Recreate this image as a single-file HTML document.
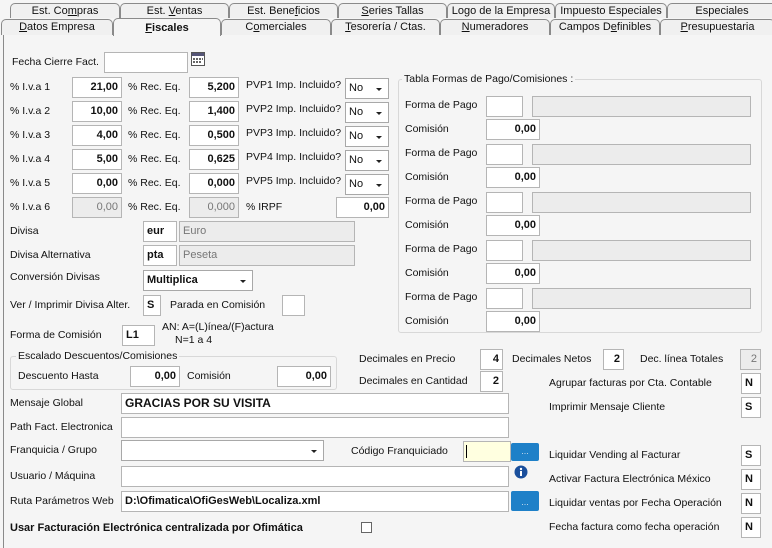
<!DOCTYPE html>
<html style="width:772px;height:548px;overflow:hidden"><head><meta charset="utf-8"><style>
*{box-sizing:border-box;margin:0;padding:0}
body{width:772px;height:548px;position:relative;background:#f5f5f5;font-family:"Liberation Sans",Arial,sans-serif;font-size:10.5px;color:#111;overflow:hidden}
.a{position:absolute;white-space:nowrap}
.t{position:absolute;height:15px;border:1px solid #8a8a8a;border-bottom:none;border-radius:5px 5px 0 0;background:#f0f0f0;text-align:center;font-size:11px;line-height:14px}
.i{position:absolute;background:#fff;border:1px solid #b5b5b5;height:21px;font-weight:bold;line-height:19px;padding:0 3px;text-align:right;font-size:11px}
.g{background:#ececec;color:#777;font-weight:normal}
.l{text-align:left}
.s{position:absolute;background:#fff;border:1px solid #a8a8a8;height:21px;line-height:19px;padding-left:3px;font-size:11px}
.s:after{content:"";position:absolute;right:6px;top:9px;border-left:3px solid transparent;border-right:3px solid transparent;border-top:3px solid #222}
.b{position:absolute;background:#1e80c8;border-radius:2px;color:#cde;text-align:center;font-size:9px;line-height:16px}
.box{position:absolute;border:1px solid #d8d8d8;border-radius:3px}
.lg{position:absolute;background:#f5f5f5;padding:0 2px}
u{text-decoration:underline}
</style></head><body>
<div class="a" style="left:3px;top:34px;width:769px;height:514px;border:1px solid #8a8a8a;border-right:none;border-bottom:none;background:#f5f5f5"></div>
<div class="t" style="left:10px;top:3px;width:110px">Est. Co<u>m</u>pras</div>
<div class="t" style="left:120px;top:3px;width:109px">Est. <u>V</u>entas</div>
<div class="t" style="left:229px;top:3px;width:109px">Est. Bene<u>f</u>icios</div>
<div class="t" style="left:338px;top:3px;width:109px"><u>S</u>eries Tallas</div>
<div class="t" style="left:447px;top:3px;width:108px">Logo de la Empresa</div>
<div class="t" style="left:555px;top:3px;width:112px">Impuesto Especiales</div>
<div class="t" style="left:667px;top:3px;width:110px">Especiales</div>
<div class="t" style="left:1px;top:19px;width:112px;height:16px"><u>D</u>atos Empresa</div>
<div class="t" style="left:221px;top:19px;width:110px;height:16px">C<u>o</u>merciales</div>
<div class="t" style="left:331px;top:19px;width:109px;height:16px"><u>T</u>esorería / Ctas.</div>
<div class="t" style="left:440px;top:19px;width:110px;height:16px"><u>N</u>umeradores</div>
<div class="t" style="left:550px;top:19px;width:110px;height:16px">Campos D<u>e</u>finibles</div>
<div class="t" style="left:660px;top:19px;width:115px;height:16px"><u>P</u>resupuestaria</div>
<div class="t" style="left:113px;top:18px;width:108px;height:18px;background:#f5f5f5;font-weight:bold;line-height:18px;border-bottom:none"><u>F</u>iscales</div>

<div class="a" style="left:12px;top:56px">Fecha Cierre Fact.</div>
<div class="i" style="left:104px;top:52px;width:84px"></div>
<svg class="a" style="left:191px;top:52px" width="14" height="14"><rect x="0.5" y="0.5" width="13" height="13" fill="#fff" stroke="#555"/><rect x="1" y="1" width="12" height="3" fill="#557"/><g fill="#666"><rect x="2" y="6" width="2" height="2"/><rect x="5" y="6" width="2" height="2"/><rect x="8" y="6" width="2" height="2"/><rect x="11" y="6" width="1" height="2"/><rect x="2" y="9" width="2" height="2"/><rect x="5" y="9" width="2" height="2"/><rect x="8" y="9" width="2" height="2"/></g></svg>

<div class="a" style="left:10px;top:81px">% I.v.a 1</div><div class="i" style="left:72px;top:77px;width:50px">21,00</div><div class="a" style="left:128px;top:81px">% Rec. Eq.</div><div class="i" style="left:189px;top:77px;width:50px">5,200</div><div class="a" style="left:246px;top:79px">PVP1 Imp. Incluido?</div><div class="s" style="left:345px;top:78px;width:44px">No</div>
<div class="a" style="left:10px;top:105px">% I.v.a 2</div><div class="i" style="left:72px;top:101px;width:50px">10,00</div><div class="a" style="left:128px;top:105px">% Rec. Eq.</div><div class="i" style="left:189px;top:101px;width:50px">1,400</div><div class="a" style="left:246px;top:103px">PVP2 Imp. Incluido?</div><div class="s" style="left:345px;top:102px;width:44px">No</div>
<div class="a" style="left:10px;top:129px">% I.v.a 3</div><div class="i" style="left:72px;top:125px;width:50px">4,00</div><div class="a" style="left:128px;top:129px">% Rec. Eq.</div><div class="i" style="left:189px;top:125px;width:50px">0,500</div><div class="a" style="left:246px;top:127px">PVP3 Imp. Incluido?</div><div class="s" style="left:345px;top:126px;width:44px">No</div>
<div class="a" style="left:10px;top:153px">% I.v.a 4</div><div class="i" style="left:72px;top:149px;width:50px">5,00</div><div class="a" style="left:128px;top:153px">% Rec. Eq.</div><div class="i" style="left:189px;top:149px;width:50px">0,625</div><div class="a" style="left:246px;top:151px">PVP4 Imp. Incluido?</div><div class="s" style="left:345px;top:150px;width:44px">No</div>
<div class="a" style="left:10px;top:177px">% I.v.a 5</div><div class="i" style="left:72px;top:173px;width:50px">0,00</div><div class="a" style="left:128px;top:177px">% Rec. Eq.</div><div class="i" style="left:189px;top:173px;width:50px">0,000</div><div class="a" style="left:246px;top:175px">PVP5 Imp. Incluido?</div><div class="s" style="left:345px;top:174px;width:44px">No</div>
<div class="a" style="left:10px;top:201px">% I.v.a 6</div><div class="i g" style="left:72px;top:197px;width:50px">0,00</div><div class="a" style="left:128px;top:201px">% Rec. Eq.</div><div class="i g" style="left:189px;top:197px;width:50px">0,000</div><div class="a" style="left:246px;top:201px">% IRPF</div><div class="i" style="left:336px;top:197px;width:53px">0,00</div>

<div class="a" style="left:10px;top:225px">Divisa</div><div class="i l" style="left:143px;top:221px;width:34px">eur</div><div class="i g l" style="left:179px;top:221px;width:176px">Euro</div>
<div class="a" style="left:10px;top:249px">Divisa Alternativa</div><div class="i l" style="left:143px;top:245px;width:34px">pta</div><div class="i g l" style="left:179px;top:245px;width:176px">Peseta</div>
<div class="a" style="left:10px;top:271px">Conversión Divisas</div><div class="s" style="left:143px;top:270px;width:110px;font-weight:bold">Multiplica</div>
<div class="a" style="left:10px;top:299px">Ver / Imprimir Divisa Alter.</div><div class="i l" style="left:143px;top:295px;width:18px">S</div>
<div class="a" style="left:170px;top:299px">Parada en Comisión</div><div class="i" style="left:282px;top:295px;width:23px"></div>
<div class="a" style="left:10px;top:329px">Forma de Comisión</div><div class="i l" style="left:122px;top:325px;width:33px">L1</div>
<div class="a" style="left:162px;top:321px">AN: A=(L)ínea/(F)actura</div><div class="a" style="left:175px;top:334px">N=1 a 4</div>

<div class="box" style="left:10px;top:356px;width:327px;height:34px"></div>
<div class="lg" style="left:16px;top:350px">Escalado Descuentos/Comisiones</div>
<div class="a" style="left:18px;top:370px">Descuento Hasta</div><div class="i" style="left:130px;top:366px;width:50px">0,00</div>
<div class="a" style="left:187px;top:370px">Comisión</div><div class="i" style="left:277px;top:366px;width:54px">0,00</div>

<div class="a" style="left:10px;top:397px">Mensaje Global</div><div class="i l" style="left:121px;top:393px;width:388px;font-size:12px">GRACIAS POR SU VISITA</div>
<div class="a" style="left:10px;top:421px">Path Fact. Electronica</div><div class="i" style="left:121px;top:417px;width:388px"></div>
<div class="a" style="left:10px;top:444px">Franquicia / Grupo</div><div class="s" style="left:121px;top:440px;width:203px"></div>
<div class="a" style="left:351px;top:445px">Código Franquiciado</div>
<div class="i" style="left:463px;top:441px;width:48px;background:#ffffe0"><span style="position:absolute;left:2px;top:3px;width:1px;height:13px;background:#000"></span></div>
<div class="b" style="left:511px;top:443px;width:28px;height:18px">...</div>
<div class="a" style="left:10px;top:470px">Usuario / Máquina</div><div class="i" style="left:121px;top:466px;width:388px"></div>
<svg class="a" style="left:514px;top:465px" width="14" height="14"><circle cx="7" cy="7" r="6.5" fill="#1a4f9c"/><circle cx="7" cy="4" r="1.2" fill="#fff"/><rect x="6" y="6" width="2" height="5" fill="#fff"/></svg>
<div class="a" style="left:10px;top:495px">Ruta Parámetros Web</div><div class="i l" style="left:121px;top:491px;width:388px">D:\Ofimatica\OfiGesWeb\Localiza.xml</div>
<div class="b" style="left:511px;top:491px;width:28px;height:20px;line-height:22px">...</div>
<div class="a" style="left:10px;top:522px;font-weight:bold;font-size:11px">Usar Facturación Electrónica centralizada por Ofimática</div>
<div class="a" style="left:361px;top:522px;width:11px;height:11px;border:1px solid #666;background:#fff"></div>

<div class="box" style="left:398px;top:79px;width:364px;height:254px"></div>
<div class="lg" style="left:402px;top:73px">Tabla Formas de Pago/Comisiones :</div>
<div class="a" style="left:405px;top:99px">Forma de Pago</div><div class="i" style="left:486px;top:96px;width:37px"></div><div class="i g" style="left:532px;top:96px;width:219px"></div>
<div class="a" style="left:405px;top:123px">Comisión</div><div class="i" style="left:486px;top:119px;width:54px">0,00</div>
<div class="a" style="left:405px;top:147px">Forma de Pago</div><div class="i" style="left:486px;top:144px;width:37px"></div><div class="i g" style="left:532px;top:144px;width:219px"></div>
<div class="a" style="left:405px;top:171px">Comisión</div><div class="i" style="left:486px;top:167px;width:54px">0,00</div>
<div class="a" style="left:405px;top:195px">Forma de Pago</div><div class="i" style="left:486px;top:192px;width:37px"></div><div class="i g" style="left:532px;top:192px;width:219px"></div>
<div class="a" style="left:405px;top:219px">Comisión</div><div class="i" style="left:486px;top:215px;width:54px">0,00</div>
<div class="a" style="left:405px;top:243px">Forma de Pago</div><div class="i" style="left:486px;top:240px;width:37px"></div><div class="i g" style="left:532px;top:240px;width:219px"></div>
<div class="a" style="left:405px;top:267px">Comisión</div><div class="i" style="left:486px;top:263px;width:54px">0,00</div>
<div class="a" style="left:405px;top:291px">Forma de Pago</div><div class="i" style="left:486px;top:288px;width:37px"></div><div class="i g" style="left:532px;top:288px;width:219px"></div>
<div class="a" style="left:405px;top:315px">Comisión</div><div class="i" style="left:486px;top:311px;width:54px">0,00</div>

<div class="a" style="left:359px;top:353px">Decimales en Precio</div><div class="i" style="left:480px;top:349px;width:23px">4</div>
<div class="a" style="left:512px;top:353px">Decimales Netos</div><div class="i" style="left:603px;top:349px;width:21px">2</div>
<div class="a" style="left:640px;top:353px">Dec. línea Totales</div><div class="i g" style="left:740px;top:349px;width:21px">2</div>
<div class="a" style="left:359px;top:375px">Decimales en Cantidad</div><div class="i" style="left:480px;top:371px;width:23px">2</div>
<div class="a" style="left:549px;top:377px">Agrupar facturas por Cta. Contable</div><div class="i l" style="left:741px;top:373px;width:20px">N</div>
<div class="a" style="left:549px;top:401px">Imprimir Mensaje Cliente</div><div class="i l" style="left:741px;top:397px;width:20px">S</div>
<div class="a" style="left:549px;top:449px">Liquidar Vending al Facturar</div><div class="i l" style="left:741px;top:445px;width:20px">S</div>
<div class="a" style="left:549px;top:473px">Activar Factura Electrónica México</div><div class="i l" style="left:741px;top:469px;width:20px">N</div>
<div class="a" style="left:549px;top:497px">Liquidar ventas por Fecha Operación</div><div class="i l" style="left:741px;top:493px;width:20px">N</div>
<div class="a" style="left:549px;top:521px">Fecha factura como fecha operación</div><div class="i l" style="left:741px;top:517px;width:20px">N</div>
</body></html>
